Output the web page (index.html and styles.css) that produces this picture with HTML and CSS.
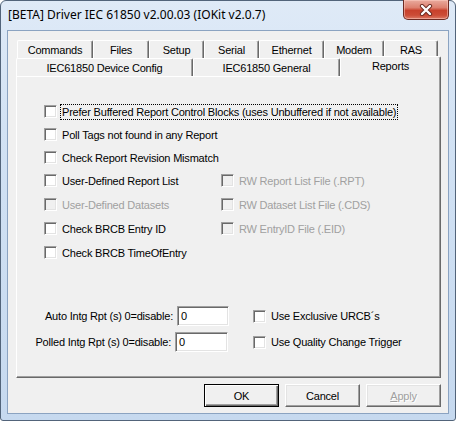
FILE: index.html
```html
<!DOCTYPE html>
<html>
<head>
<meta charset="utf-8">
<link rel="stylesheet" href="styles.css">
</head>
<body>
<div class="window">
  <div class="titlebar">
    <span class="title">[BETA] Driver IEC 61850 v2.00.03 (IOKit v2.0.7)</span>
    <div class="close">
      <svg width="14" height="12" viewBox="0 0 14 12">
        <path d="M3 2 L11 10 M11 2 L3 10" stroke="#6a2a20" stroke-width="4.2" stroke-linecap="round"/>
        <path d="M3 2 L11 10 M11 2 L3 10" stroke="#ffffff" stroke-width="2.4" stroke-linecap="round"/>
      </svg>
    </div>
  </div>
  <div class="client">
    <div class="tabctl">
      <div class="tabrow row1">
        <div class="tab t-commands">Commands</div>
        <div class="tab t-files">Files</div>
        <div class="tab t-setup">Setup</div>
        <div class="tab t-serial">Serial</div>
        <div class="tab t-ethernet">Ethernet</div>
        <div class="tab t-modem">Modem</div>
        <div class="tab t-ras">RAS</div>
      </div>
      <div class="tabrow row2">
        <div class="tab t-device">IEC61850 Device Config</div>
        <div class="tab t-general">IEC61850 General</div>
        <div class="tab t-reports selected">Reports</div>
      </div>
      <div class="page">
        <div class="opts">
          <div class="row">
            <label class="cb"><span class="box"></span><span class="focus">Prefer Buffered Report Control Blocks (uses Unbuffered if not available)</span></label>
          </div>
          <div class="row">
            <label class="cb"><span class="box"></span><span>Poll Tags not found in any Report</span></label>
          </div>
          <div class="row">
            <label class="cb"><span class="box"></span><span>Check Report Revision Mismatch</span></label>
          </div>
          <div class="row">
            <label class="cb col1"><span class="box"></span><span>User-Defined Report List</span></label>
            <label class="cb disabled"><span class="box"></span><span>RW Report List File (.RPT)</span></label>
          </div>
          <div class="row row-wide">
            <label class="cb col1 disabled"><span class="box"></span><span>User-Defined Datasets</span></label>
            <label class="cb disabled"><span class="box"></span><span>RW Dataset List File (.CDS)</span></label>
          </div>
          <div class="row row-wide">
            <label class="cb col1"><span class="box"></span><span>Check BRCB Entry ID</span></label>
            <label class="cb disabled"><span class="box"></span><span>RW EntryID File (.EID)</span></label>
          </div>
          <div class="row row-wide">
            <label class="cb"><span class="box"></span><span>Check BRCB TimeOfEntry</span></label>
          </div>
        </div>
        <div class="bottom">
          <div class="fields">
            <div class="field">
              <span class="flabel l1">Auto Intg Rpt (s) 0=disable:</span>
              <span class="edit e1">0</span>
            </div>
            <div class="field">
              <span class="flabel l2">Polled Intg Rpt (s) 0=disable:</span>
              <span class="edit e2">0</span>
            </div>
          </div>
          <div class="checks">
            <label class="cb crow"><span class="box"></span><span>Use Exclusive URCB´s</span></label>
            <label class="cb crow"><span class="box"></span><span>Use Quality Change Trigger</span></label>
          </div>
        </div>
      </div>
    </div>
    <div class="buttons">
      <div class="btn default"><span>OK</span></div>
      <div class="btn"><span>Cancel</span></div>
      <div class="btn disabled"><span><u>A</u>pply</span></div>
    </div>
  </div>
</div>
</body>
</html>
```

FILE: styles.css
```css
html, body {
  margin: 0;
  padding: 0;
  background: #ffffff;
}

body {
  font-family: "Liberation Sans", Arial, sans-serif;
  font-size: 11px;
  letter-spacing: -0.2px;
  color: #000;
}

.window {
  box-sizing: border-box;
  width: 456px;
  height: 421px;
  border: 1px solid #52647a;
  border-radius: 6px 6px 3px 3px;
  background: linear-gradient(to bottom, #dfeaf7 0%, #d2e2f4 30%, #c6d9ef 100%);
  padding: 0 6px 6px 6px;
  display: flex;
  flex-direction: column;
}

.titlebar {
  height: 29px;
  flex: none;
  display: flex;
  justify-content: space-between;
  align-items: flex-start;
}

.title {
  font-family: "Noto Sans", "Open Sans", sans-serif;
  font-size: 12px;
  letter-spacing: 0;
  padding-left: 1px;
  margin-top: 6px;
  line-height: 16px;
  color: #000;
}

.close {
  box-sizing: border-box;
  width: 46px;
  height: 20px;
  margin-top: -1px;
  border: 1px solid #6d2a22;
  border-top: none;
  border-radius: 0 0 5px 5px;
  background: linear-gradient(to bottom, #e9ab9e 0%, #dd806f 40%, #c8412c 55%, #cc4c36 80%, #dc7a66 100%);
  box-shadow: inset 0 0 0 1px rgba(255, 210, 200, 0.5);
  display: flex;
  align-items: center;
  justify-content: center;
}

.close svg {
  display: block;
}

.client {
  flex: 1;
  border: 1px solid #8ba3c1;
  background: #f0f0f0;
  display: flex;
  flex-direction: column;
}

.tabctl {
  margin: 9px 7px 0 8px;
  display: flex;
  flex-direction: column;
}

.tabrow {
  display: flex;
  height: 18px;
  flex: none;
}

.row1 {
  margin-left: 1px;
}

.row2 {
  align-items: flex-start;
}

.tab {
  box-sizing: border-box;
  flex: none;
  height: 18px;
  border-top: 1px solid #ffffff;
  border-left: 1px solid #ffffff;
  border-right: 1px solid #696969;
  box-shadow: inset -1px 0 #a0a0a0;
  border-radius: 2px 2px 0 0;
  display: flex;
  align-items: center;
  justify-content: center;
  background: #f0f0f0;
  white-space: nowrap;
}

.t-commands { width: 76px; }
.t-files { width: 56px; }
.t-setup { width: 55px; }
.t-serial { width: 55px; }
.t-ethernet { width: 65px; }
.t-modem { width: 60px; }
.t-ras { width: 54px; }

.t-device { width: 177px; }
.t-general { width: 147px; }

.t-reports {
  flex: 1;
}

.tab.selected {
  position: relative;
  z-index: 1;
  height: 21px;
  margin-top: -2px;
  padding-bottom: 2px;
}

.page {
  box-sizing: border-box;
  height: 302px;
  border-top: 1px solid #ffffff;
  border-left: 1px solid #ffffff;
  border-right: 1px solid #696969;
  border-bottom: 1px solid #696969;
  box-shadow: inset -1px -1px #a0a0a0;
  padding: 26px 0 0 27px;
  display: flex;
  flex-direction: column;
}

.opts {
  display: flex;
  flex-direction: column;
  gap: 6px;
}

.row {
  display: flex;
  align-items: center;
  height: 17px;
}

.row-wide {
  margin-top: 1px;
}

.cb {
  display: flex;
  align-items: center;
  gap: 5px;
  white-space: nowrap;
}

.col1 {
  width: 177px;
  flex: none;
}

.box {
  box-sizing: border-box;
  width: 13px;
  height: 13px;
  flex: none;
  background: #ffffff;
  border-top: 1px solid #a0a0a0;
  border-left: 1px solid #a0a0a0;
  border-bottom: 1px solid #ffffff;
  border-right: 1px solid #ffffff;
  box-shadow: inset 1px 1px #696969, inset -1px -1px #e3e3e3;
}

.disabled {
  color: #a0a0a0;
}

.disabled .box {
  background: #f0f0f0;
}

.focus {
  outline: 1px dotted #000000;
  outline-offset: 1px;
}

.bottom {
  margin-top: 45px;
  display: flex;
}

.fields {
  margin-left: -27px;
  display: flex;
  flex-direction: column;
  gap: 6px;
}

.field {
  display: flex;
  align-items: center;
  height: 20px;
  gap: 4px;
}

.flabel {
  text-align: right;
  white-space: nowrap;
}

.l1 { width: 156px; }
.l2 { width: 154px; }

.edit {
  box-sizing: border-box;
  height: 20px;
  background: #ffffff;
  border-top: 1px solid #a0a0a0;
  border-left: 1px solid #a0a0a0;
  border-bottom: 1px solid #ffffff;
  border-right: 1px solid #ffffff;
  box-shadow: inset 1px 1px #696969, inset -1px -1px #e3e3e3;
  padding: 0 0 0 3px;
  display: flex;
  align-items: center;
}

.e1 { width: 52px; }
.e2 { width: 53px; }

.checks {
  margin-left: 24px;
  display: flex;
  flex-direction: column;
  gap: 6px;
}

.crow {
  height: 20px;
}

.buttons {
  margin: 6px 7px 0 0;
  display: flex;
  justify-content: flex-end;
  gap: 6px;
}

.btn {
  box-sizing: border-box;
  width: 75px;
  height: 23px;
  background: #f0f0f0;
  border-top: 1px solid #ffffff;
  border-left: 1px solid #ffffff;
  border-right: 1px solid #696969;
  border-bottom: 1px solid #696969;
  box-shadow: inset -1px -1px #a0a0a0, inset 1px 1px #e3e3e3;
  display: flex;
  align-items: center;
  justify-content: center;
}

.btn.default {
  border: 1px solid #000000;
  box-shadow: inset 1px 1px #ffffff, inset -1px -1px #696969, inset -2px -2px #a0a0a0;
}

.btn.disabled {
  color: #a0a0a0;
  text-shadow: 1px 1px #ffffff;
}
```
